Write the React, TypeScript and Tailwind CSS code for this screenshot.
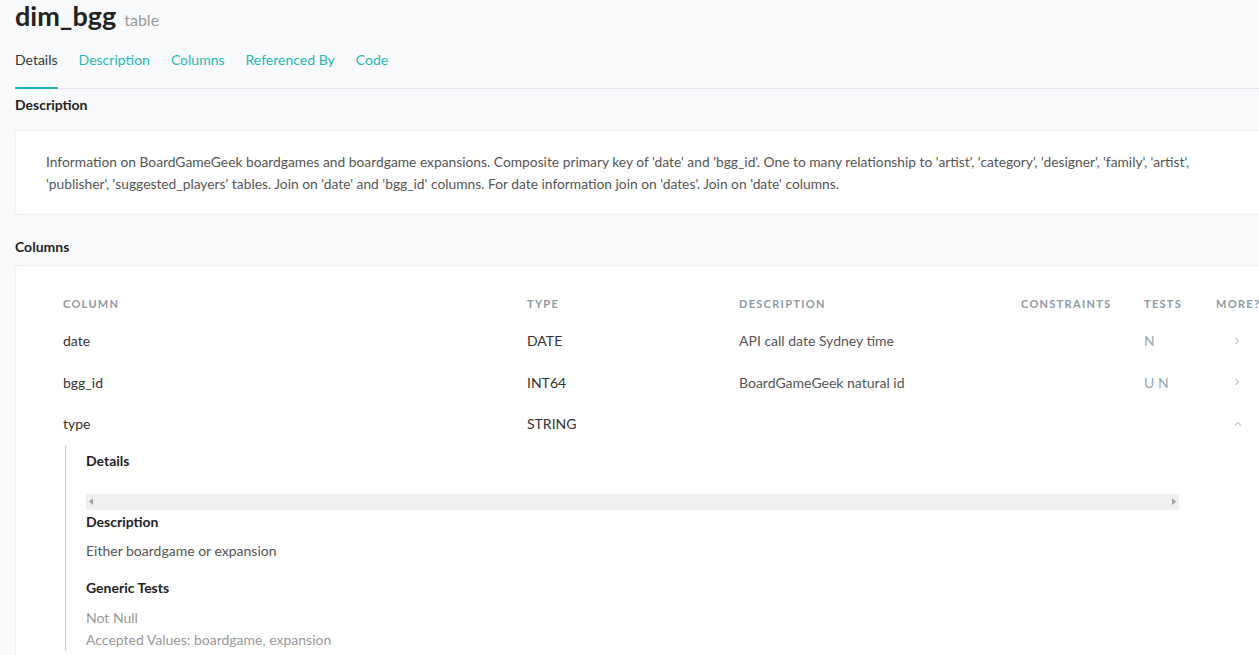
import React from "react";

const font = { fontFamily: "Lato, 'Noto Sans', 'Open Sans', sans-serif" };

function ChevronRight() {
  return (
    <svg width="6" height="8" viewBox="0 0 6 8" className="inline-block">
      <path d="M1.5 1 L4.5 4 L1.5 7" fill="none" stroke="#9aa4ad" strokeWidth="1" />
    </svg>
  );
}
function ChevronUp() {
  return (
    <svg width="8" height="6" viewBox="0 0 8 6" className="inline-block">
      <path d="M1 4.5 L4 1.5 L7 4.5" fill="none" stroke="#9aa4ad" strokeWidth="1" />
    </svg>
  );
}

const cols = "grid grid-cols-[464px_212px_282px_123px_72px_60px]";

function Row({ name, type, desc, tests, open }: { name: string; type: string; desc: string; tests: string; open?: boolean }) {
  return (
    <div className={`${cols} h-[41.5px] items-center text-[14px] text-[#333]`}>
      <div>{name}</div>
      <div>{type}</div>
      <div className="text-[#555]">{desc}</div>
      <div></div>
      <div className="text-[#98a6b3]">{tests}</div>
      <div className="pl-[18px] flex items-center">{open ? <ChevronUp /> : <ChevronRight />}</div>
    </div>
  );
}

export default function App() {
  return (
    <div className="w-[1259px] h-[655px] overflow-hidden bg-[#f9fafb]" style={font}>
      <div className="w-[1320px] pl-[15px]">
        <div className="flex items-baseline gap-[8px]">
          <h1 className="text-[27px] font-bold text-[#222] leading-[32px]">dim_bgg</h1>
          <span className="text-[16px] text-[#999]">table</span>
        </div>
        <div className="mt-[10px] flex gap-[21px] border-b border-[#e5e7eb] text-[14px]">
          <div className="h-[47px] pt-[7px] border-b-2 border-[#1fb8b5] text-[#333] -mb-px">Details</div>
          <div className="pt-[7px] text-[#1fb8b5]">Description</div>
          <div className="pt-[7px] text-[#1fb8b5]">Columns</div>
          <div className="pt-[7px] text-[#1fb8b5]">Referenced By</div>
          <div className="pt-[7px] text-[#1fb8b5]">Code</div>
        </div>
        <h2 className="mt-[7px] text-[14px] font-bold text-[#222] leading-[18px]">Description</h2>
        <div className="mt-[16px] bg-white border border-[#eef0f2] rounded-[4px] h-[85px] pl-[30px] pt-[20px] text-[13.8px] leading-[22px] text-[#555]">
          Information on BoardGameGeek boardgames and boardgame expansions. Composite primary key of 'date' and 'bgg_id'. One to many relationship to 'artist', 'category', 'designer', 'family', 'artist',
          <br />
          'publisher', 'suggested_players' tables. Join on 'date' and 'bgg_id' columns. For date information join on 'dates'. Join on 'date' columns.
        </div>
        <h2 className="mt-[23px] text-[14px] font-bold text-[#222] leading-[18px]">Columns</h2>
        <div className="mt-[9px] bg-white border border-[#eef0f2] rounded-[4px] h-[420px] pl-[47px] pt-[30px]">
          <div className={`${cols} text-[11px] font-bold tracking-[1.3px] text-[#8d99a6] h-[16px] items-center`}>
            <div>COLUMN</div>
            <div>TYPE</div>
            <div>DESCRIPTION</div>
            <div>CONSTRAINTS</div>
            <div>TESTS</div>
            <div>MORE?</div>
          </div>
          <div className="mt-[8px]">
            <Row name="date" type="DATE" desc="API call date Sydney time" tests="N" />
            <Row name="bgg_id" type="INT64" desc="BoardGameGeek natural id" tests="U N" />
            <Row name="type" type="STRING" desc="" tests="" open />
          </div>
          <div className="ml-[2px] border-l border-[#cfcfcf] pl-[20px] pt-[7px] w-[1114px]">
            <h3 className="text-[14px] font-bold text-[#222] leading-[18px]">Details</h3>
            <div className="mt-[24px] h-[16px] bg-[#f0f0f0] flex items-center justify-between px-[3px]">
              <svg width="5" height="7" viewBox="0 0 5 7"><path d="M4 0 L4 7 L0 3.5 Z" fill="#a3a3a3" /></svg>
              <svg width="5" height="7" viewBox="0 0 5 7"><path d="M1 0 L1 7 L5 3.5 Z" fill="#a3a3a3" /></svg>
            </div>
            <h3 className="mt-[3px] text-[14px] font-bold text-[#222] leading-[18px]">Description</h3>
            <p className="mt-[11px] text-[14px] text-[#555] leading-[18px]">Either boardgame or expansion</p>
            <h3 className="mt-[19px] text-[14px] font-bold text-[#222] leading-[18px]">Generic Tests</h3>
            <p className="mt-[10px] text-[14px] text-[#999] leading-[22px]">Not Null</p>
            <p className="text-[14px] text-[#999] leading-[22px]">Accepted Values: boardgame, expansion</p>
          </div>
        </div>
      </div>
    </div>
  );
}
